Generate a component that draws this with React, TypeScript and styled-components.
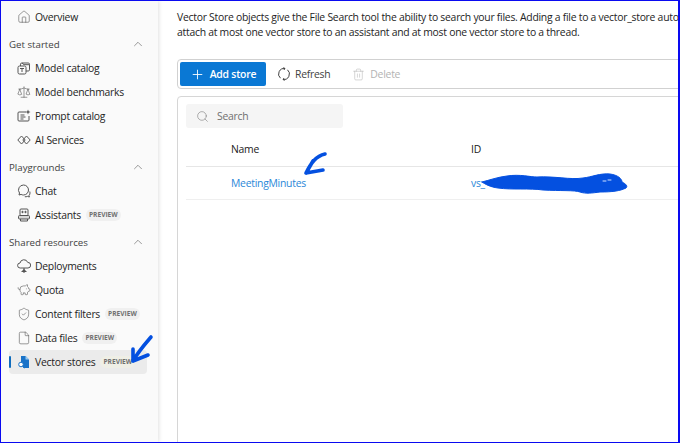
import React from "react";
import styled, { createGlobalStyle } from "styled-components";
import { ChevronUp, House, Scale, PiggyBank, ShieldCheck, File, Search, Plus, Trash2 } from "lucide-react";

const Global = createGlobalStyle`
  html, body { margin: 0; padding: 0; background: #fff; }
  #root { width: 680px; height: 443px; }
`;

const Shell = styled.div`
  position: relative;
  box-sizing: border-box;
  width: 680px;
  height: 443px;
  border: 1px solid #0a0af0;
  border-right-width: 2px;
  display: flex;
  overflow: hidden;
  background: #fff;
  font-family: "Open Sans", "Noto Sans", sans-serif;
  font-size: 10.4px;
  letter-spacing: -0.26px;
  color: #242424;
`;

const Sidebar = styled.nav`
  flex: 0 0 157px;
  box-sizing: border-box;
  padding-top: 4px;
  background: #fafafa;
  box-shadow: 1px 0 4px rgba(0, 0, 0, 0.12);
  z-index: 1;
`;

const Group = styled.div`
  margin-top: 3px;
`;

const GroupHeader = styled.div`
  height: 24px;
  display: flex;
  align-items: center;
  justify-content: space-between;
  padding: 0 13px 0 8px;
  font-size: 9.7px;
  letter-spacing: 0;
  color: #424242;
`;

const Row = styled.div<{ $active?: boolean }>`
  position: relative;
  box-sizing: border-box;
  height: 24px;
  width: 138px;
  margin-left: 8px;
  padding-left: 8px;
  display: flex;
  align-items: center;
  gap: 4px;
  border-radius: 4px;
  background: ${(p) => (p.$active ? "#ebebeb" : "transparent")};
  color: #242424;
  ${(p) =>
    p.$active &&
    `&::before {
      content: "";
      position: absolute;
      left: 0;
      top: 6px;
      width: 2px;
      height: 12px;
      border-radius: 1px;
      background: #0f6cbd;
    }`}
  svg {
    flex: 0 0 14px;
  }
`;

const Label = styled.span`
  white-space: nowrap;
`;

const Badge = styled.span<{ $faint?: boolean }>`
  margin-left: 1px;
  padding: 0 3px;
  height: 12px;
  line-height: 12px;
  border-radius: 6px;
  background: ${(p) => (p.$faint ? "#efefe6" : "#f0f0f0")};
  color: #707070;
  font-size: 6.6px;
  font-weight: 700;
  letter-spacing: 0;
`;

const Main = styled.main`
  flex: 1 1 auto;
  min-width: 0;
  padding: 9px 0 0 19px;
  overflow: hidden;
`;

const Intro = styled.p`
  margin: 0;
  width: 700px;
  line-height: 15px;
  white-space: nowrap;
  color: #242424;
`;

const Toolbar = styled.div`
  box-sizing: border-box;
  width: 640px;
  height: 30px;
  margin-top: 19px;
  padding: 2px;
  display: flex;
  align-items: center;
  border: 1px solid #d1d1d1;
  border-radius: 4px;
`;

const PrimaryButton = styled.button`
  box-sizing: border-box;
  width: 86px;
  height: 24px;
  display: flex;
  align-items: center;
  justify-content: center;
  gap: 5px;
  border: 0;
  border-radius: 2px;
  padding: 0;
  background: #0a78d4;
  color: #fff;
  font: 600 10.4px "Open Sans", sans-serif;
  letter-spacing: -0.2px;
`;

const GhostButton = styled.button<{ $disabled?: boolean }>`
  margin-left: ${(p) => (p.$disabled ? "22px" : "11px")};
  display: flex;
  align-items: center;
  gap: ${(p) => (p.$disabled ? "5px" : "4px")};
  border: 0;
  padding: 0;
  background: none;
  color: ${(p) => (p.$disabled ? "#b3b3b3" : "#424242")};
  font: 10.4px "Open Sans", sans-serif;
  letter-spacing: -0.26px;
`;

const Panel = styled.section`
  box-sizing: border-box;
  width: 640px;
  height: 400px;
  margin-top: 7px;
  padding: 7px 0 0 8px;
  border: 1px solid #d6d6d6;
  border-radius: 4px;
`;

const SearchBox = styled.div`
  box-sizing: border-box;
  width: 157px;
  height: 24px;
  padding-left: 10px;
  display: flex;
  align-items: center;
  gap: 8px;
  border-radius: 3px;
  background: #f5f5f5;
  color: #707070;
`;

const Columns = styled.div`
  display: grid;
  grid-template-columns: 240px 1fr;
  padding-left: 45px;
  align-items: center;
`;

const HeaderRow = styled(Columns)`
  box-sizing: border-box;
  height: 39px;
  padding-top: 3px;
  font-weight: 500;
  color: #1a1a1a;
  border-bottom: 1px solid #e6e6e6;
`;

const DataRow = styled(Columns)`
  height: 32px;
  border-bottom: 1px solid #efefef;
  color: #2b88d8;
`;

const Scribble = styled.svg`
  position: absolute;
  left: -1px;
  top: -1px;
  width: 680px;
  height: 443px;
  pointer-events: none;
  z-index: 2;
`;

const ico = { size: 14, strokeWidth: 1, color: "#555555" };

const Boxes = () => (
  <svg width="14" height="14" viewBox="0 0 14 14" fill="none" stroke="#555555" strokeWidth="1">
    <rect x="1" y="5" width="8" height="8" rx="1.5" />
    <path d="M3.500 5V3.200C3.500 2.400 4 2 4.800 2h6.500c.8 0 1.200.5 1.200 1.200v5.600c0 .7-.4 1.200-1.200 1.200H9M5 1.900l2 1.800h5M3 7.500h4M5 7.500V11" />
  </svg>
);
const PromptIcon = () => (
  <svg width="14" height="14" viewBox="0 0 14 14" fill="none" stroke="#555555" strokeWidth="1">
    <path d="M9 3H2a1 1 0 0 0-1 1v7a1 1 0 0 0 1 1h9a1 1 0 0 0 1-1V7M3.500 6h4M3.500 8h5M3.500 10h3" />
    <path d="M11 .5l.7 1.800 1.800.7-1.800.7-.7 1.800-.7-1.800L8.500 3l1.800-.7z" fill="#555555" stroke="none" />
  </svg>
);
const ServicesIcon = () => (
  <svg width="14" height="14" viewBox="0 0 14 14" fill="none" stroke="#555555" strokeWidth="1">
    <path d="M4.500 3L.8 7l3.700 4L8.200 7zM9.500 3L5.800 7l3.700 4 3.700-4z" />
  </svg>
);
const ChatIcon = () => (
  <svg width="14" height="14" viewBox="0 0 14 14" fill="none" stroke="#555555" strokeWidth="1">
    <path d="M6.500 1a5 5 0 0 1 5 5c0 2.800-2.200 5-5 5-1 0-1.600-.2-2.400-.6L2 11l.5-2A5 5 0 0 1 6.500 1z" />
    <path d="M12.800 7.500c.6 2-.2 3.500-.8 4l.4 1.500-2-.6c-.8.4-1.800.5-2.600.3" />
  </svg>
);
const BotIcon = () => (
  <svg width="14" height="14" viewBox="0 0 14 14" fill="none" stroke="#555555" strokeWidth="1">
    <rect x="3" y="1" width="8" height="6.500" rx="1" />
    <rect x="1.500" y="7.500" width="11" height="3.500" rx="1" fill="#d8d8d8" />
    <path d="M3.500 11v2h7v-2" />
    <circle cx="5.500" cy="4" r=".7" fill="#555555" />
    <circle cx="8.500" cy="4" r=".7" fill="#555555" />
  </svg>
);
const CloudIcon = () => (
  <svg width="14" height="14" viewBox="0 0 14 14" fill="none" stroke="#555555" strokeWidth="1">
    <path d="M4 9H3.200A2.500 2.500 0 0 1 3 4a4 4 0 0 1 7.700-.6A2.800 2.800 0 0 1 11 9H4zM7 9v3M4.500 12.500h5" />
    <circle cx="7" cy="12" r="1.200" fill="#555555" />
  </svg>
);
const VectorIcon = () => (
  <svg width="14" height="14" viewBox="0 0 14 14">
    <path d="M4 1h4.500L12 4.500V13H6.500L4 9z" fill="#1a73c8" />
    <path d="M8.500 1L12 4.500H8.500z" fill="#9ccbef" />
    <circle cx="4" cy="9.500" r="2.300" fill="#fff" stroke="#1a73c8" strokeWidth="1" />
    <path d="M5.500 11.200L7.500 13" stroke="#1a73c8" strokeWidth="1" />
  </svg>
);
const RefreshIcon = () => (
  <svg width="14" height="14" viewBox="0 0 14 14" fill="none" stroke="#424242" strokeWidth="1">
    <path d="M8 1.600A5.500 5.500 0 0 0 3.500 11.200M6 12.400A5.500 5.500 0 0 0 10.500 2.800" />
    <path d="M6.500 .5L8 1.600L6.800 3M7.500 13.500L6 12.400L7.200 11" />
  </svg>
);

const chevron = <ChevronUp size={14} strokeWidth={1} color="#555555" />;

export default function App() {
  return (
    <>
      <Global />
      <Shell>
        <Sidebar>
          <Row>
            <House {...ico} />
            <Label>Overview</Label>
          </Row>
          <Group>
            <GroupHeader>Get started{chevron}</GroupHeader>
            <Row><Boxes /><Label>Model catalog</Label></Row>
            <Row><Scale {...ico} /><Label>Model benchmarks</Label></Row>
            <Row><PromptIcon /><Label>Prompt catalog</Label></Row>
            <Row><ServicesIcon /><Label>AI Services</Label></Row>
          </Group>
          <Group>
            <GroupHeader>Playgrounds{chevron}</GroupHeader>
            <Row><ChatIcon /><Label>Chat</Label></Row>
            <Row><BotIcon /><Label>Assistants</Label><Badge>PREVIEW</Badge></Row>
          </Group>
          <Group>
            <GroupHeader>Shared resources{chevron}</GroupHeader>
            <Row><CloudIcon /><Label>Deployments</Label></Row>
            <Row><PiggyBank {...ico} /><Label>Quota</Label></Row>
            <Row><ShieldCheck {...ico} /><Label>Content filters</Label><Badge>PREVIEW</Badge></Row>
            <Row><File {...ico} /><Label>Data files</Label><Badge>PREVIEW</Badge></Row>
            <Row $active><VectorIcon /><Label>Vector stores</Label><Badge $faint>PREVIEW</Badge></Row>
          </Group>
        </Sidebar>
        <Main>
          <Intro>
            Vector Store objects give the File Search tool the ability to search your files. Adding a file to a vector_store automatically parses
            <br />
            attach at most one vector store to an assistant and at most one vector store to a thread.
          </Intro>
          <Toolbar>
            <PrimaryButton><Plus size={15} strokeWidth={1.4} color="#fff" />Add store</PrimaryButton>
            <GhostButton><RefreshIcon />Refresh</GhostButton>
            <GhostButton $disabled><Trash2 size={13} strokeWidth={1} color="#b3b3b3" />Delete</GhostButton>
          </Toolbar>
          <Panel>
            <SearchBox><Search size={13} strokeWidth={1} color="#707070" />Search</SearchBox>
            <HeaderRow><span>Name</span><span>ID</span></HeaderRow>
            <DataRow><span>MeetingMinutes</span><span>vs_</span></DataRow>
          </Panel>
        </Main>
        <Scribble viewBox="0 0 680 443" fill="none" stroke="#0450e0" strokeLinecap="round" strokeLinejoin="round">
          <path d="M151 337C145 344 138 352 133 361M133 361L133 349M133 361L148 355" strokeWidth="3.600" />
          <path d="M325 154C316 156 311 163 306 173M306 173L313 161M306 173L323 170" strokeWidth="3.600" />
          <path
            d="M482 182C490 180 498 177 507 176C520 174 530 177 537 177C555 176 570 180 583 178C592 177 600 173 610 174C618 175 622 179 622 182C626 184 628 186 626 188C620 191 612 192 600 192C592 193 586 194 580 192C575 190 560 191 543 190C530 188 512 190 498 188C490 187 485 184 482 182Z"
            fill="#0450e0"
            strokeWidth="1"
          />
          <path d="M603 181h3M608 180h3" stroke="#cfe0ff" strokeWidth="1" />
        </Scribble>
      </Shell>
    </>
  );
}
